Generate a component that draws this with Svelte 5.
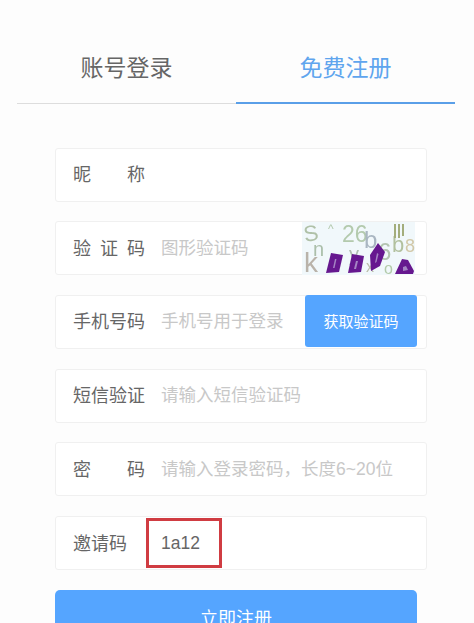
<script>
	const rows = [
		{ label: '昵称', placeholder: '' },
		{ label: '验证码', placeholder: '图形验证码', captcha: true },
		{ label: '手机号码', placeholder: '手机号用于登录', sms: true },
		{ label: '短信验证', placeholder: '请输入短信验证码' },
		{ label: '密码', placeholder: '请输入登录密码，长度6~20位' },
		{ label: '邀请码', placeholder: '', value: '1a12', left: true }
	];
</script>

<div class="page">
	<div class="tabs">
		<div class="tab">账号登录</div>
		<div class="tab active">免费注册</div>
	</div>

	<form class="form">
		{#each rows as row}
			<div class="row">
				<span class="label" class:left={row.left}>{row.label}</span>
				<input class="field" placeholder={row.placeholder} value={row.value ?? ''} />
				{#if row.captcha}
					<svg class="captcha" viewBox="0 0 113 53" aria-hidden="true">
						<rect width="113" height="53" fill="#f1f8fb" />
						<g font-family="Liberation Sans, sans-serif" opacity="0.85">
							<text x="3" y="20" fill="#a5b89a" font-size="22" transform="rotate(-10 3 20)">S</text>
							<text x="11" y="34" fill="#9fb59c" font-size="20">n</text>
							<text x="2" y="50" fill="#b0a79c" font-size="28">k</text>
							<text x="26" y="11" fill="#a9c0a0" font-size="12">^</text>
							<text x="40" y="20" fill="#a9c2a0" font-size="23">26</text>
							<text x="62" y="26" fill="#9dabb8" font-size="24">b</text>
							<text x="47" y="39" fill="#a3b5a4" font-size="20">y</text>
							<text x="76" y="38" fill="#a9bba4" font-size="24">6</text>
							<text x="90" y="30" fill="#a8b890" font-size="22">b</text>
							<text x="103" y="30" fill="#cdc09a" font-size="18">8</text>
							<text x="64" y="50" fill="#b3b59e" font-size="16">x</text>
							<text x="82" y="52" fill="#a8c39c" font-size="16">o</text>
						</g>
						<g stroke="#a3ad7c" stroke-width="2">
							<path d="M93 2 v14 M97 2 v14 M101 2 v12" />
						</g>
						<g fill="#66188f">
							<path d="M29 31 l12 2 l-4 17 l-13 1 z" />
							<path d="M50 32 l12 2 l-3 16 l-13 1 z" />
							<path d="M76 21 l7 9 l-5 14 l-9 5 l-1 -16 z" />
							<path d="M100 37 l6 1 l6 11 l-1 3 h-18 z" />
						</g>
						<g fill="#a585c4">
							<path d="M33 37 l1.5 0 l-2 9 l-1.5 0 z" />
							<path d="M54 39 l2 0 l-2 8 l-2 0 z" />
							<path d="M75 31 l1.5 1 l-2 8 l-1.5 1 z" />
							<path d="M101 45 l3 -1 l2 4 l-5 1 z" />
						</g>
					</svg>
				{/if}
				{#if row.sms}
					<button class="sms" type="button">获取验证码</button>
				{/if}
			</div>
		{/each}
		<div class="mark"></div>
		<button class="submit" type="button">立即注册</button>
	</form>
</div>

<style>
	:global(body) {
		background: #fdfdfd;
		overflow: hidden;
	}
	.page {
		height: 623px;
		overflow: hidden;
		padding: 46px 19px 0 17px;
		box-sizing: border-box;
		font-family: "Liberation Sans", "Noto Sans CJK SC", sans-serif;
		color: #666;
	}
	.tabs {
		display: flex;
	}
	.tab {
		flex: 1;
		height: 58px;
		box-sizing: border-box;
		border-bottom: 1px solid #ddd;
		font-size: 23px;
		line-height: 44px;
		text-align: center;
	}
	.tab.active {
		color: #5fa5ee;
		border-bottom: 2px solid #5a9fe8;
	}
	.form {
		position: relative;
		display: flex;
		flex-direction: column;
		gap: 19.7px;
		margin: 43.6px 28px 0 38px;
	}
	.row {
		display: flex;
		align-items: center;
		height: 54px;
		box-sizing: border-box;
		padding-left: 17px;
		background: #fff;
		border: 1px solid #f0f0f0;
		border-radius: 3px;
	}
	.label {
		width: 72px;
		flex: none;
		padding-bottom: 3px;
		font-size: 18px;
		white-space: nowrap;
		text-align: justify;
		text-align-last: justify;
	}
	.label.left {
		text-align-last: left;
	}
	.field {
		flex: 1;
		min-width: 0;
		margin-left: 16px;
		padding: 0;
		border: 0;
		outline: 0;
		background: transparent;
		font: 17.5px "Liberation Sans", "Noto Sans CJK SC", sans-serif;
		color: #666;
	}
	.field::placeholder {
		color: #c8c8c8;
	}
	.captcha {
		width: 113px;
		height: 53px;
		flex: none;
		margin-right: 11px;
		filter: blur(0.4px);
	}
	.sms {
		width: 112px;
		height: 52px;
		flex: none;
		align-self: flex-start;
		margin: -1px 9px 0 0;
		padding: 0;
		border: 0;
		border-radius: 3px;
		background: #55a5ff;
		color: #fff;
		font: 15px "Liberation Sans", "Noto Sans CJK SC", sans-serif;
	}
	.submit {
		width: 362px;
		height: 54px;
		padding: 0;
		border: 0;
		border-radius: 5px;
		background: #55a5ff;
		color: #fff;
		font: 18px "Liberation Sans", "Noto Sans CJK SC", sans-serif;
	}
	.mark {
		position: absolute;
		left: 91px;
		top: 370.4px;
		width: 76px;
		height: 50px;
		box-sizing: border-box;
		border: 3px solid #d03c42;
		pointer-events: none;
	}
</style>
